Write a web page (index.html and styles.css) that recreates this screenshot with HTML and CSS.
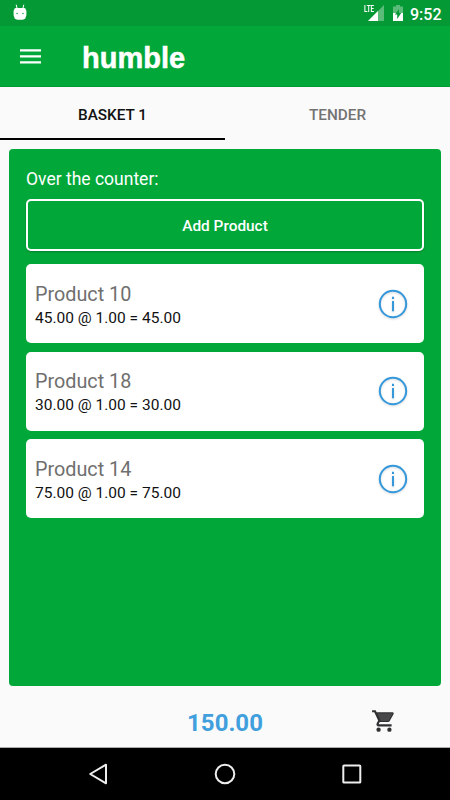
FILE: index.html
```html
<!DOCTYPE html>
<html lang="en">
<head>
<meta charset="utf-8">
<title>humble</title>
<link rel="stylesheet" href="styles.css">
</head>
<body>
<div class="screen">
  <div class="status">
    <svg class="droid" width="14" height="17" viewBox="0 0 14 17">
      <path d="M3.200 .7 4 4M10.800 .7 10 4" stroke="#fff" stroke-width="1"/>
      <path d="M1.200 5.500Q1.200 4 2.700 4h8.600q1.500 0 1.500 1.500l.6 1.200v4.500l-.7 2Q12.500 15.800 7 15.800T1.300 13.200L.6 11.200v-4.500z" fill="#fff"/>
      <circle cx="4.100" cy="9.500" r=".7" fill="#049934"/><circle cx="10" cy="9.500" r=".7" fill="#049934"/>
    </svg>
    <span class="lte">LTE</span>
    <svg class="signal" width="16" height="16" viewBox="0 0 16 16">
      <path d="M16 0v16H0z" fill="#fff" fill-opacity=".35"/>
      <path d="M10 6v10H0z" fill="#fff"/>
    </svg>
    <svg class="battery" width="10" height="16" viewBox="0 0 10 16">
      <path d="M3 0h4v1.500h3V8H0V1.500h3z" fill="#fff" fill-opacity=".35"/>
      <path d="M0 8h10v8H0z" fill="#fff"/>
      <path d="M6 4.200V8h2.200L4.200 14v-4.500H1.900z" fill="#049934"/>
    </svg>
    <span class="clock">9:52</span>
  </div>
  <header class="bar">
    <svg width="22" height="16" viewBox="0 0 22 16"><path d="M0 2.400h21M0 8.400h21M0 14.400h21" stroke="#fff" stroke-width="2.200"/></svg>
    <h1 class="brand">humble</h1>
  </header>
  <nav class="tabs">
    <div class="tab active"><span>BASKET 1</span></div>
    <div class="tab"><span>TENDER</span></div>
  </nav>
  <main class="panel">
    <h2 class="title"><span>Over the counter:</span></h2>
    <button class="add"><span>Add Product</span></button>
    <section class="cards">
      <article class="card">
        <div><div class="name">Product 10</div><div class="line">45.00 @ 1.00 = 45.00</div></div>
        <svg class="info" width="32" height="32" viewBox="0 0 32 32"><circle cx="16" cy="16" r="13.200"/><path d="M16 13V23.300M16 8.800v2.200"/></svg>
      </article>
      <article class="card">
        <div><div class="name">Product 18</div><div class="line">30.00 @ 1.00 = 30.00</div></div>
        <svg class="info" width="32" height="32" viewBox="0 0 32 32"><circle cx="16" cy="16" r="13.200"/><path d="M16 13V23.300M16 8.800v2.200"/></svg>
      </article>
      <article class="card">
        <div><div class="name">Product 14</div><div class="line">75.00 @ 1.00 = 75.00</div></div>
        <svg class="info" width="32" height="32" viewBox="0 0 32 32"><circle cx="16" cy="16" r="13.200"/><path d="M16 13V23.300M16 8.800v2.200"/></svg>
      </article>
    </section>
  </main>
  <footer class="total">
    <span class="amount">150.00</span>
    <svg class="cart" width="26" height="26" viewBox="0 0 24 24">
      <path d="M1 2v2h2l3.600 7.590-1.350 2.450C4.520 15.370 5.480 17 7 17h12v-2H7.420c-.14 0-.25-.11-.25-.25l.03-.12.900-1.630h7.450c.75 0 1.410-.41 1.750-1.030L20.880 5.480C21.250 4.820 20.760 4 20 4H5.210L4.270 2z" fill="#303033"/>
      <path d="M5.900 5h14l-3.700 7H9.100z" fill="#48484a"/>
      <circle cx="7" cy="20" r="2" fill="#303033"/><circle cx="17" cy="20" r="2" fill="#303033"/>
    </svg>
  </footer>
  <div class="navbar">
    <svg width="20" height="22" viewBox="0 0 20 22"><path d="M18 1.700v18.600L2.200 11z"/></svg>
    <svg width="22" height="22" viewBox="0 0 22 22"><circle cx="11" cy="11" r="9.300"/></svg>
    <svg width="20" height="20" viewBox="0 0 20 20"><rect x="1.300" y="1.600" width="17" height="17" rx=".7"/></svg>
  </div>
</div>
</body>
</html>
```

FILE: styles.css
```css
* { box-sizing: border-box; }
body { margin: 0; font-family: Roboto, "Liberation Sans", sans-serif; background: #fafafa; }
svg { display: block; flex: none; }
.screen { width: 450px; height: 800px; display: flex; flex-direction: column; overflow: hidden; }
.status { height: 26px; flex: none; background: #049934; display: flex; color: #fff; padding: 0 9px 0 13px; }
.droid { margin-top: 4px; }
.lte { position: relative; z-index: 1; margin: 5px 0 0 auto; width: 11px; font: 700 9px/9px Roboto, sans-serif; transform: scaleX(.7); transform-origin: left; white-space: nowrap; }
.signal { margin: 5px 0 0 -7px; width: 16px; }
.battery { margin: 5px 0 0 9px; }
.clock { margin-left: 7px; width: 31px; font-size: 16px; line-height: 29px; font-weight: 500; white-space: nowrap; }
.bar { height: 61px; flex: none; background: #01a839; display: flex; align-items: center; padding-left: 20px; border-bottom: 1px solid #019c31; }
.brand { margin: 3px 0 0 40px; color: #fff; font: 700 29px/34px "Liberation Sans", sans-serif; -webkit-text-stroke: .5px #fff; }
.tabs { height: 53px; flex: none; display: flex; }
.tab { flex: 1; display: flex; align-items: center; justify-content: center; font-size: 15.300px; font-weight: 500; color: #737373; padding-top: 4px; border-bottom: 2px solid transparent; }
.active { color: #111; border-color: #000; }
.panel { margin: 9px 9px 0; height: 537px; flex: none; background: #01a839; border-radius: 4px; padding: 17px 17px 0; }
.title { margin: 0; height: 33px; color: #fff; font-size: 17.500px; font-weight: 400; line-height: 27px; }
.add { display: block; width: 100%; height: 52px; border: 2px solid #fff; border-radius: 5px; background: none; color: #fff; font: 500 15.400px/20px Roboto, sans-serif; padding: 1px 0 0; box-shadow: 0 1px 2px rgba(0,0,0,.25); }
.cards { display: grid; gap: 8.500px; margin-top: 13.400px; }
.card { height: 79px; background: #fff; border-radius: 5px; display: flex; align-items: center; justify-content: space-between; padding: 0 15px 0 9px; }
.name { font-size: 19.800px; line-height: 24px; color: #6f6f6f; padding-top: 4px; height: 28px; }
.line { font-size: 15.500px; line-height: 22px; color: #111; }
.info { fill: none; stroke: #3598db; stroke-width: 2; filter: drop-shadow(0 1px 1px rgba(0,0,0,.15)); }
.total { height: 62px; flex: none; display: grid; grid-template-columns: 1fr auto 1fr; align-items: center; padding-top: 12px; border-bottom: 1px solid #aaa; }
.amount { grid-column: 2; font-size: 24px; line-height: 32px; font-weight: 700; color: #429fdd; }
.cart { justify-self: end; margin: -3px 53px 0 0; }
.navbar { height: 52px; flex: none; background: #000; display: flex; align-items: center; justify-content: space-between; padding: 0 88px; }
.navbar svg { fill: none; stroke: #eee; stroke-width: 2; stroke-linejoin: round; }
```
